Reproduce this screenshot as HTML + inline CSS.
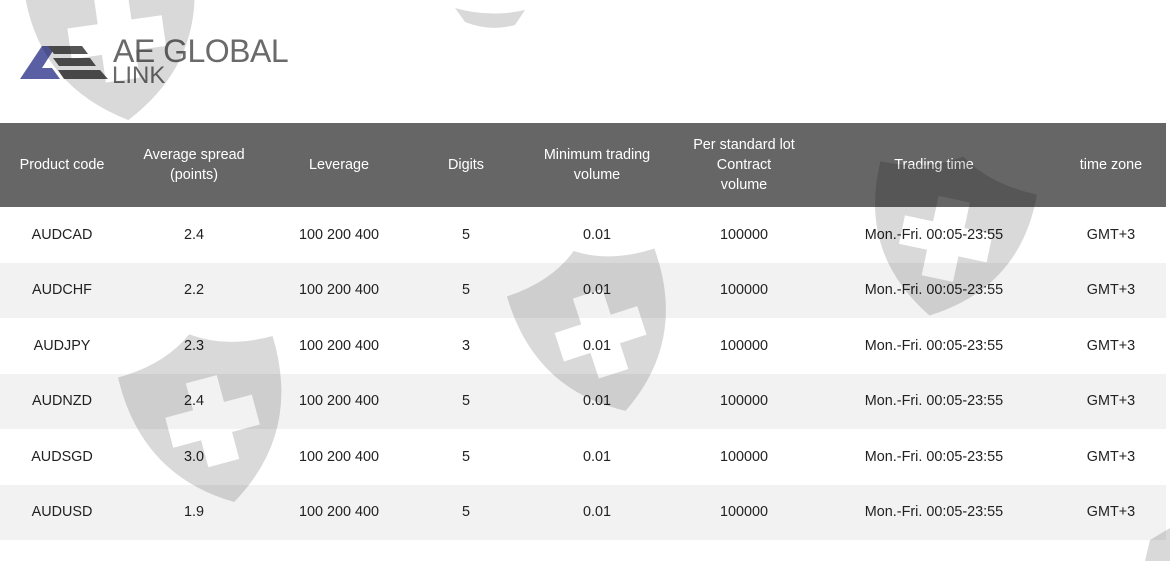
<!DOCTYPE html>
<html><head><meta charset="utf-8"><style>
body{margin:0;width:1170px;height:561px;background:#fff;font-family:"Liberation Sans",sans-serif;position:relative;overflow:hidden}
.logo{position:absolute;left:20px;top:36px}
.t1{position:absolute;left:113px;top:33px;font-size:32px;color:#6a6a6a;letter-spacing:-0.5px}
.t2{position:absolute;left:112px;top:62px;font-size:24px;color:#6a6a6a}
table{position:absolute;top:123px;left:0;width:1166px;border-collapse:collapse;font-size:14.4px;color:#222}
th{background:#666;color:#fff;font-weight:normal;height:84px;line-height:20px;padding:0}
td{height:55.5px;text-align:center;padding:0}
tr.g td{background:#f2f2f2}
svg.wm{position:absolute;left:0;top:0}
</style></head><body>
<svg class="logo" width="90" height="46" viewBox="0 0 90 46">
<polygon points="0,43 22,10 36,10 22,32 32,32 40,43" fill="#5a5ea3"/>
<polygon points="28,10 62,10 68,18 34,18" fill="#555"/>
<polygon points="33,22 70,22 76,30 39,30" fill="#555"/>
<polygon points="38,34 80,34 88,43 44,43" fill="#555"/>
</svg>
<div class="t1">AE GLOBAL</div>
<div class="t2">LINK</div>
<table>
<tr><th style="width:124px">Product code</th><th style="width:140px">Average spread<br>(points)</th><th style="width:150px">Leverage</th><th style="width:104px">Digits</th><th style="width:158px">Minimum trading<br>volume</th><th style="width:136px">Per standard lot<br>Contract<br>volume</th><th style="width:244px">Trading time</th><th>time zone</th></tr>
<tr><td>AUDCAD</td><td>2.4</td><td>100 200 400</td><td>5</td><td>0.01</td><td>100000</td><td>Mon.-Fri. 00:05-23:55</td><td>GMT+3</td></tr>
<tr class="g"><td>AUDCHF</td><td>2.2</td><td>100 200 400</td><td>5</td><td>0.01</td><td>100000</td><td>Mon.-Fri. 00:05-23:55</td><td>GMT+3</td></tr>
<tr><td>AUDJPY</td><td>2.3</td><td>100 200 400</td><td>3</td><td>0.01</td><td>100000</td><td>Mon.-Fri. 00:05-23:55</td><td>GMT+3</td></tr>
<tr class="g"><td>AUDNZD</td><td>2.4</td><td>100 200 400</td><td>5</td><td>0.01</td><td>100000</td><td>Mon.-Fri. 00:05-23:55</td><td>GMT+3</td></tr>
<tr><td>AUDSGD</td><td>3.0</td><td>100 200 400</td><td>5</td><td>0.01</td><td>100000</td><td>Mon.-Fri. 00:05-23:55</td><td>GMT+3</td></tr>
<tr class="g"><td>AUDUSD</td><td>1.9</td><td>100 200 400</td><td>5</td><td>0.01</td><td>100000</td><td>Mon.-Fri. 00:05-23:55</td><td>GMT+3</td></tr>
</table>
<svg class="wm" width="1170" height="561">
<defs><path id="sh" fill-rule="evenodd" d="M0,15 Q30,15 50,0 Q70,15 100,15 Q102,80 50,112 Q-2,80 0,15 Z M40,30 L60,30 L60,48 L78,48 L78,68 L60,68 L60,86 L40,86 L40,68 L22,68 L22,48 L40,48 Z"/></defs>
<g fill="rgba(0,0,0,0.15)">
<use href="#sh" transform="translate(20,-40) rotate(-8) scale(1.7,1.55)"/>
<use href="#sh" transform="translate(500,275) rotate(-18) scale(1.55,1.5)"/>
<use href="#sh" transform="translate(885,140) rotate(12) scale(1.6,1.45)"/>
<use href="#sh" transform="translate(112,355) rotate(-15) scale(1.6,1.55)"/>
<path d="M455,8 Q490,18 525,10 L515,25 Q490,32 465,22 Z"/>
<path d="M1150,540 L1170,528 L1170,561 L1145,561 Z"/>
</g>
</svg>
</body></html>
